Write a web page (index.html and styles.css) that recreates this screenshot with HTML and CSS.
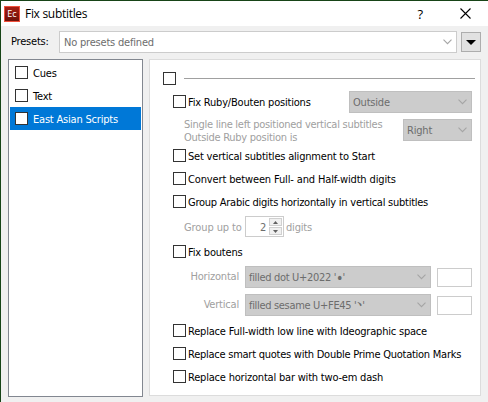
FILE: index.html
```html
<!DOCTYPE html>
<html lang="en">
<head>
<meta charset="utf-8">
<title>Fix subtitles</title>
<link rel="stylesheet" href="styles.css">
</head>
<body>
<div class="window">
  <header class="titlebar">
    <span class="logo">Ec</span>
    <span class="title">Fix subtitles</span>
    <span class="help">?</span>
    <svg class="close" width="11" height="11" viewBox="0 0 11 11"><path d="M.5 .5l10 10M10.5 .5l-10 10"/></svg>
  </header>
  <div class="presets">
    <span class="presets-label">Presets:</span>
    <div class="combo"><span>No presets defined</span><svg class="chev" width="9" height="6" viewBox="0 0 9 6"><path d="M.5 .7l4 4l4-4"/></svg></div>
    <div class="drop"><svg width="10" height="5" viewBox="0 0 10 5"><path d="M0 0h10l-5 5z"/></svg></div>
  </div>
  <main class="content">
    <div class="list">
      <div class="item"><i class="cb"></i><span>Cues</span></div>
      <div class="item"><i class="cb"></i><span>Text</span></div>
      <div class="item selected"><i class="cb"></i><span>East Asian Scripts</span></div>
    </div>
    <div class="panel">
      <div class="row head"><i class="cb"></i><hr></div>
      <div class="row"><i class="cb"></i><span>Fix Ruby/Bouten positions</span>
        <div class="select outside"><span>Outside</span><svg class="chev" width="9" height="6" viewBox="0 0 9 6"><path d="M.5 .7l4 4l4-4"/></svg></div></div>
      <div class="sub side"><span class="two-line">Single line left positioned vertical subtitles<br>Outside Ruby position is</span>
        <div class="select right"><span>Right</span><svg class="chev" width="9" height="6" viewBox="0 0 9 6"><path d="M.5 .7l4 4l4-4"/></svg></div></div>
      <div class="row"><i class="cb"></i><span>Set vertical subtitles alignment to Start</span></div>
      <div class="row"><i class="cb"></i><span class="loose">Convert between Full- and Half-width digits</span></div>
      <div class="row"><i class="cb"></i><span class="tight">Group Arabic digits horizontally in vertical subtitles</span></div>
      <div class="sub group"><span class="group-label">Group up to</span>
        <div class="spin"><span>2</span><div class="arrows">
          <b><svg width="5" height="3" viewBox="0 0 5 3"><path d="M0 3h5l-2.5-3z"/></svg></b>
          <b><svg width="5" height="3" viewBox="0 0 5 3"><path d="M0 0h5l-2.5 3z"/></svg></b></div></div>
        <span>digits</span></div>
      <div class="row"><i class="cb"></i><span>Fix boutens</span></div>
      <div class="sub bouten"><span class="bouten-label">Horizontal</span>
        <div class="select wide"><span>filled dot U+2022 '<strong>•</strong>'</span><svg class="chev" width="9" height="6" viewBox="0 0 9 6"><path d="M.5 .7l4 4l4-4"/></svg></div><div class="box"></div></div>
      <div class="sub bouten last"><span class="bouten-label">Vertical</span>
        <div class="select wide"><span>filled sesame U+FE45 '<em>﹅</em>'</span><svg class="chev" width="9" height="6" viewBox="0 0 9 6"><path d="M.5 .7l4 4l4-4"/></svg></div><div class="box"></div></div>
      <div class="row"><i class="cb"></i><span>Replace Full-width low line with Ideographic space</span></div>
      <div class="row"><i class="cb"></i><span class="tight">Replace smart quotes with Double Prime Quotation Marks</span></div>
      <div class="row"><i class="cb"></i><span>Replace horizontal bar with two-em dash</span></div>
    </div>
  </main>
</div>
</body>
</html>
```
FILE: styles.css
```css
* { box-sizing: border-box; }
body { margin: 0; }
.window {
  width: 488px; height: 402px; overflow: hidden;
  display: flex; flex-direction: column;
  background: #f0f0f0; color: #000;
  border-top: 1px solid #174417; border-left: 1px solid #174417;
  font: 11px/13px "DejaVu Sans Condensed", "DejaVu Sans", sans-serif;
  letter-spacing: -0.2px; white-space: nowrap;
}
.titlebar { height: 25px; flex: none; display: flex; align-items: center; background: #fff; padding: 0 17px 0 3px; }
.logo {
  width: 16px; height: 16px; border: 1px solid #f0503c;
  background: linear-gradient(#a51f12, #6d120a); color: #fff;
  font: 9px/14px "Open Sans", sans-serif; text-align: center; letter-spacing: 0;
}
.title { margin-left: 5px; font: 12px/16px "Open Sans", sans-serif; letter-spacing: -0.3px; }
.help { margin-left: auto; font: 13px/16px "Open Sans", sans-serif; }
.close { margin-left: 37px; fill: none; stroke: #000; stroke-width: 1.1; }
.presets { height: 33px; flex: none; display: flex; padding: 5px 0 0 10px; }
.presets-label { width: 48px; line-height: 21px; }
.combo { width: 398px; height: 22px; display: flex; align-items: center; justify-content: space-between; padding: 0 4px 0 4px; border: 1px solid #ccc; background: #fff; color: #6d6d6d; }
.combo > span { padding-top: 1px; }
.chev { fill: none; stroke: #a5a5a5; stroke-width: 1.1; }
.drop { width: 20px; height: 20px; margin: 1px 0 0 4px; display: flex; align-items: center; justify-content: center; border: 1px solid #adadad; background: #e1e1e1; }
.content { display: flex; align-items: flex-start; padding-left: 7px; }
.list { width: 135px; height: 338px; padding: 1px; border: 1px solid #828790; background: #fff; }
.item { height: 23px; display: flex; align-items: center; gap: 5px; padding-left: 5px; }
.item > span, .row > span, .sub > span, .spin > span { padding-top: 2px; }
.selected { background: #0078d7; color: #fff; }
.cb { flex: none; width: 13px; height: 13px; border: 1px solid #333; background: #fff; }
.panel { width: 332px; height: 337px; margin-left: 6px; padding: 7px 8px 0 13px; border: 1px solid #dcdcdc; background: #fff; }
.row { height: 23px; display: flex; align-items: center; gap: 2px; padding-left: 10px; }
.tight { letter-spacing: -0.25px; }
.loose { letter-spacing: -0.14px; }
.two-line { letter-spacing: -0.27px; }
.head { padding: 0; gap: 8px; }
.head hr { flex: none; width: 291px; height: 1px; margin: 0; border: 0; background: #a0a0a0; }
.select { height: 22px; flex: none; display: flex; align-items: center; justify-content: space-between; padding: 0 4px 0 3px; border: 1px solid #bfbfbf; background: #ccc; color: #6d6d6d; }
.outside { width: 123px; margin: 1px 0 0 auto; }
.right { width: 69px; }
.wide { width: 186px; letter-spacing: -0.32px; }
.select em { font: 6px/6px "Noto Sans CJK JP", sans-serif; vertical-align: 3px; }
.select strong { font: 14px/6px "DejaVu Sans Condensed", sans-serif; vertical-align: -2px; letter-spacing: -1px; }
.sub { display: flex; align-items: center; padding-left: 21px; color: #a0a0a0; }
.side { height: 22px; margin: 6px 0 3px; justify-content: space-between; }
.group { height: 21px; margin: 3px 0; }
.group-label { width: 61px; letter-spacing: -0.1px; }
.spin { width: 39px; height: 21px; margin-right: 2px; display: flex; align-items: center; justify-content: flex-end; gap: 3px; padding-right: 1px; border: 1px solid #ccc; color: #6d6d6d; }
.arrows { width: 13px; display: flex; flex-direction: column; gap: 1px; }
.arrows b { height: 8px; display: flex; align-items: center; justify-content: center; border: 1px solid #d0d0d0; background: #f0f0f0; fill: #606060; }
.bouten { height: 22px; margin: 3px 0 6px; }
.bouten.last { margin: 0 0 3px; }
.sub > .bouten-label { width: 55px; margin-right: 6px; padding: 0 0 1px; text-align: right; }
.box { width: 35px; height: 19px; margin-left: 6px; margin-top: 1px; border: 1px solid #ccc; }
```
